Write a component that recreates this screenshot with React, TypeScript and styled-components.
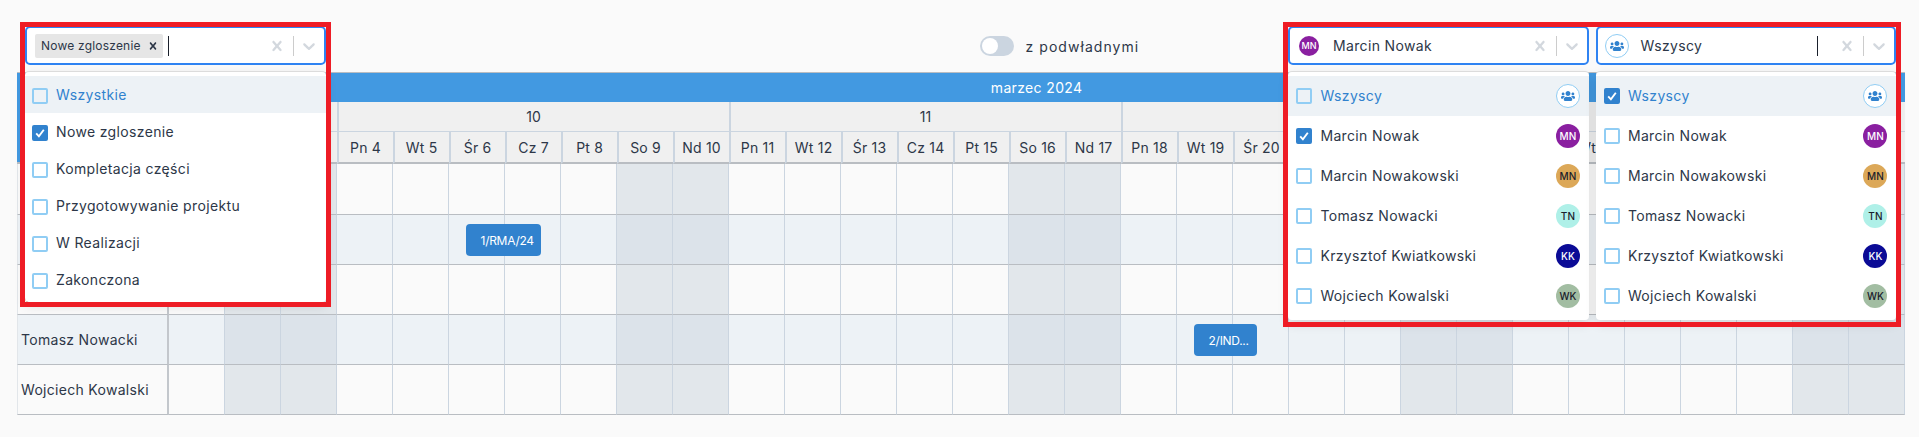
import React from "react";
import styled, { createGlobalStyle } from "styled-components";
import { FaUsers } from "react-icons/fa";

const people = [
  { name: "Marcin Nowak", initials: "MN", bg: "#8a1fa0", fg: "#ffffff" },
  { name: "Marcin Nowakowski", initials: "MN", bg: "#dca858", fg: "#1a202c" },
  { name: "Tomasz Nowacki", initials: "TN", bg: "#aff0e8", fg: "#1a202c" },
  { name: "Krzysztof Kwiatkowski", initials: "KK", bg: "#0b0b96", fg: "#ffffff" },
  { name: "Wojciech Kowalski", initials: "WK", bg: "#a2bda2", fg: "#1a202c" },
];

const statuses = [
  "Nowe zgloszenie",
  "Kompletacja części",
  "Przygotowywanie projektu",
  "W Realizacji",
  "Zakonczona",
];

const rowNames = [
  "Marcin Nowak",
  "Marcin Nowakowski",
  "Krzysztof Kwiatkowski",
  "Tomasz Nowacki",
  "Wojciech Kowalski",
];

const weeks = [
  { label: "9", days: 3 },
  { label: "10", days: 7 },
  { label: "11", days: 7 },
  { label: "12", days: 7 },
  { label: "13", days: 7 },
];

const dayNames = ["Pt", "So", "Nd", "Pn", "Wt", "Śr", "Cz"];
const days = Array.from({ length: 31 }, (_, i) => ({
  num: i + 1,
  name: dayNames[i % 7],
  weekend: i % 7 === 1 || i % 7 === 2,
}));

const events = [
  { row: 1, day: 6, label: "1/RMA/24", width: 75 },
  { row: 3, day: 19, label: "2/IND...", width: 63 },
];

const ClearIcon = ({ size = 20 }: { size?: number }) => (
  <svg width={size} height={size} viewBox="0 0 20 20" fill="currentColor">
    <path d="M14.348 14.849c-0.469 0.469-1.229 0.469-1.697 0l-2.651-3.030-2.651 3.029c-0.469 0.469-1.229 0.469-1.697 0-0.469-0.469-0.469-1.229 0-1.697l2.758-3.15-2.759-3.152c-0.469-0.469-0.469-1.228 0-1.697s1.228-0.469 1.697 0l2.652 3.031 2.651-3.031c0.469-0.469 1.228-0.469 1.697 0s0.469 1.229 0 1.697l-2.758 3.152 2.758 3.15c0.469 0.469 0.469 1.229 0 1.698z" />
  </svg>
);

const ChevronIcon = () => (
  <svg width="20" height="20" viewBox="0 0 20 20" fill="currentColor">
    <path d="M4.516 7.548c0.436-0.446 1.043-0.481 1.576 0l3.908 3.747 3.908-3.747c0.533-0.481 1.141-0.446 1.574 0 0.436 0.445 0.408 1.197 0 1.615-0.406 0.418-4.695 4.502-4.695 4.502-0.217 0.223-0.502 0.335-0.787 0.335s-0.57-0.112-0.789-0.335c0 0-4.287-4.084-4.695-4.502s-0.436-1.17 0-1.615z" />
  </svg>
);

const CheckMark = () => (
  <svg width="12" height="12" viewBox="0 0 12 12" fill="none">
    <path d="M2.2 6.4 4.9 9.3 9.8 2.8" stroke="#fff" strokeWidth="1.9" />
  </svg>
);

const Indicators = () => (
  <>
    <ClearBox>
      <ClearIcon />
    </ClearBox>
    <Separator />
    <ChevronBox>
      <ChevronIcon />
    </ChevronBox>
  </>
);

const Option = ({ label, checked, active, tall, children }: { label: string; checked?: boolean; active?: boolean; tall?: boolean; children?: React.ReactNode }) => (
  <OptionRow $active={active} $tall={tall}>
    <Checkbox $checked={checked}>{checked && <CheckMark />}</Checkbox>
    <OptionLabel $active={active}>{label}</OptionLabel>
    {children}
  </OptionRow>
);

const GroupAvatar = () => (
  <GroupCircle>
    <FaUsers size={14} />
  </GroupCircle>
);

const PeopleMenu = ({ selected }: { selected?: string }) => (
  <Menu>
    <Option label="Wszyscy" active tall checked={!selected}>
      <GroupAvatar />
    </Option>
    {people.map((p) => (
      <Option key={p.name} label={p.name} tall checked={selected === p.name}>
        <Avatar $size={24} $bg={p.bg} $fg={p.fg}>
          {p.initials}
        </Avatar>
      </Option>
    ))}
  </Menu>
);

function App() {
  return (
    <>
      <GlobalStyle />
      <Toolbar>
        <SelectGroup>
          <Control>
            <ChipArea>
              <Chip>
                Nowe zgloszenie
                <ChipRemove>
                  <ClearIcon size={14} />
                </ChipRemove>
              </Chip>
              <Caret />
            </ChipArea>
            <Indicators />
          </Control>
          <Menu>
            <Option label="Wszystkie" active />
            {statuses.map((s, i) => (
              <Option key={s} label={s} checked={i === 0} />
            ))}
          </Menu>
          <RedFrame $height={285} />
        </SelectGroup>

        <SwitchRow>
          <SwitchTrack>
            <SwitchKnob />
          </SwitchTrack>
          z podwładnymi
        </SwitchRow>

        <RightSelects>
          <SelectGroup>
            <Control>
              <ValueArea>
                <AvatarSlot>
                  <Avatar $size={20} $bg="#8a1fa0" $fg="#fff">
                    MN
                  </Avatar>
                </AvatarSlot>
                <ValueText>Marcin Nowak</ValueText>
              </ValueArea>
              <Indicators />
            </Control>
            <PeopleMenu selected="Marcin Nowak" />
          </SelectGroup>
          <SelectGroup>
            <Control>
              <ValueArea>
                <AvatarSlot>
                  <GroupAvatar />
                </AvatarSlot>
                <ValueText>Wszyscy</ValueText>
                <TrailingCaret />
              </ValueArea>
              <Indicators />
            </Control>
            <PeopleMenu />
          </SelectGroup>
          <RedFrame $height={305} />
        </RightSelects>
      </Toolbar>

      <Calendar>
        <Corner />
        <MonthCell>marzec 2024</MonthCell>
        {weeks.map((w) => (
          <WeekCell key={w.label} $span={w.days}>
            {w.label}
          </WeekCell>
        ))}
        {days.map((d) => (
          <DayCell key={d.num}>
            {d.name} {d.num}
          </DayCell>
        ))}
        {rowNames.map((name, r) => (
          <React.Fragment key={name}>
            <NameCell $even={r % 2 === 1}>{name}</NameCell>
            {days.map((d) => {
              const ev = events.find((e) => e.row === r && e.day === d.num);
              return (
                <BodyCell key={d.num} $even={r % 2 === 1} $weekend={d.weekend}>
                  {ev && <EventBar style={{ width: ev.width }}>{ev.label}</EventBar>}
                </BodyCell>
              );
            })}
          </React.Fragment>
        ))}
      </Calendar>
    </>
  );
}

export default App;

const GlobalStyle = createGlobalStyle`
  * {
    box-sizing: border-box;
  }
  html, body {
    margin: 0;
    height: 100%;
    overflow: hidden;
    background: #fafafa;
    color: #2d3748;
    font-family: Inter, "Liberation Sans", sans-serif;
    font-size: 14px;
  }
`;

const Toolbar = styled.div`
  display: flex;
  align-items: flex-start;
  height: 72px;
  padding: 26px 23px 0 25px;
`;

const SelectGroup = styled.div`
  position: relative;
  width: 300.5px;
`;

const RightSelects = styled.div`
  position: relative;
  display: flex;
  gap: 7px;
  margin-left: auto;
`;

const RedFrame = styled.div<{ $height: number }>`
  position: absolute;
  top: -4px;
  left: -5px;
  right: -5px;
  height: ${(p) => p.$height}px;
  border: 5px solid #ee1c25;
  pointer-events: none;
  z-index: 5;
`;

const Control = styled.div`
  display: flex;
  align-items: center;
  height: 39px;
  background: #fff;
  border: 2px solid #2f83f2;
  border-radius: 5px;
`;

const ChipArea = styled.div`
  flex: 1;
  display: flex;
  align-items: center;
  gap: 5px;
  padding-left: 8px;
`;

const Chip = styled.div`
  display: flex;
  align-items: center;
  justify-content: space-between;
  width: 128px;
  height: 24px;
  padding: 0 3px 0 6px;
  background: #e6e6e6;
  border-radius: 2px;
  font-size: 12px;
  letter-spacing: 0.2px;
`;

const ChipRemove = styled.span`
  display: flex;
  color: #2d3748;
`;

const Caret = styled.span`
  width: 1px;
  height: 20px;
  background: #1a202c;
`;

const TrailingCaret = styled(Caret)`
  margin-left: auto;
  margin-right: 13px;
`;

const ValueArea = styled.div`
  flex: 1;
  display: flex;
  align-items: center;
  gap: 12px;
  padding-left: 7px;
`;

const AvatarSlot = styled.div`
  display: flex;
  justify-content: center;
  width: 24px;
`;

const ValueText = styled.span`
  letter-spacing: 0.35px;
`;

const ClearBox = styled.div`
  display: flex;
  justify-content: center;
  width: 32px;
  color: #d3d8de;
`;

const Separator = styled.span`
  width: 1px;
  height: 20px;
  background: #cccccc;
`;

const ChevronBox = styled.div`
  display: flex;
  justify-content: center;
  width: 30px;
  color: #d3d8de;
`;

const Menu = styled.div`
  position: absolute;
  top: 45px;
  left: 0;
  right: 0;
  padding: 4px 0;
  background: #fff;
  border-top: 1px solid #dcdcdc;
  border-radius: 4px;
  box-shadow: 0 4px 11px rgba(0, 0, 0, 0.12);
  z-index: 4;
`;

const OptionRow = styled.div<{ $active?: boolean; $tall?: boolean }>`
  display: flex;
  align-items: center;
  height: ${(p) => (p.$tall ? 40 : 37)}px;
  padding: ${(p) => (p.$tall ? "0 8.6px 0 8.4px" : "2px 8px 0 7px")};
  background: ${(p) => (p.$active ? "#edf2f6" : "#fff")};
`;

const Checkbox = styled.span<{ $checked?: boolean }>`
  display: flex;
  align-items: center;
  justify-content: center;
  width: 16px;
  height: 16px;
  border: 2px solid ${(p) => (p.$checked ? "#3182ce" : "#90cdf4")};
  border-radius: 2px;
  background: ${(p) => (p.$checked ? "#3182ce" : "transparent")};
`;

const OptionLabel = styled.span<{ $active?: boolean }>`
  flex: 1;
  margin: 0 0 2px 8px;
  letter-spacing: 0.35px;
  color: ${(p) => (p.$active ? "#3182ce" : "#2d3748")};
`;

const Avatar = styled.span<{ $size: number; $bg: string; $fg: string }>`
  display: flex;
  align-items: center;
  justify-content: center;
  width: ${(p) => p.$size}px;
  height: ${(p) => p.$size}px;
  border-radius: 50%;
  background: ${(p) => p.$bg};
  color: ${(p) => p.$fg};
  font-size: ${(p) => (p.$size > 20 ? 10 : 9)}px;
  font-weight: 500;
`;

const GroupCircle = styled.span`
  display: flex;
  align-items: center;
  justify-content: center;
  width: 24px;
  height: 24px;
  border: 1px solid #90cdf4;
  border-radius: 50%;
  background: #fff;
  color: #3182ce;
`;

const SwitchRow = styled.div`
  display: flex;
  align-items: center;
  gap: 12px;
  height: 40px;
  margin-left: 654px;
  letter-spacing: 1.05px;
`;

const SwitchTrack = styled.span`
  display: flex;
  align-items: center;
  width: 34px;
  height: 20px;
  padding: 2px;
  border-radius: 10px;
  background: #cbd5e0;
`;

const SwitchKnob = styled.span`
  width: 16px;
  height: 16px;
  border-radius: 50%;
  background: #fff;
`;

const Calendar = styled.div`
  display: grid;
  grid-template-columns: 151.6px repeat(31, 1fr);
  grid-template-rows: 29px 30px 32px 51px repeat(4, 50px);
  width: 1887.6px;
  margin-left: 17px;
  border-top: 1px solid #b9bdc2;
`;

const Corner = styled.div`
  grid-row: span 3;
  background: #4299e1;
  border-bottom: 2px solid #b9bdc2;
`;

const MonthCell = styled.div`
  grid-column: span 31;
  display: flex;
  align-items: center;
  justify-content: center;
  background: #4299e1;
  color: #fff;
  letter-spacing: 0.35px;
`;

const HeaderCell = styled.div`
  display: flex;
  align-items: center;
  justify-content: center;
  background: #f0f0f0;
  border-left: 2px solid #cbd5e0;
  letter-spacing: 0.2px;
`;

const WeekCell = styled(HeaderCell)<{ $span: number }>`
  grid-column: span ${(p) => p.$span};
  border-bottom: 1px solid #cbd5e0;
`;

const DayCell = styled(HeaderCell)`
  border-bottom: 2px solid #b9bdc2;
`;

const NameCell = styled.div<{ $even: boolean }>`
  display: flex;
  align-items: center;
  padding-left: 3px;
  background: ${(p) => (p.$even ? "#edf2f6" : "#fafafa")};
  border-left: 1px solid #e2e6ea;
  border-right: 2px solid #c3c7cc;
  border-bottom: 1px solid #b9bdc2;
  letter-spacing: 0.3px;
`;

const weekendColor = (even: boolean) => (even ? "#dce3ea" : "#e2e7eb");
const workColor = (even: boolean) => (even ? "#edf2f6" : "#fafafa");

const BodyCell = styled.div<{ $even: boolean; $weekend: boolean }>`
  position: relative;
  background: ${(p) => (p.$weekend ? weekendColor(p.$even) : workColor(p.$even))};
  border-right: 1px solid #cbd5e0;
  border-bottom: 1px solid #b9bdc2;
`;

const EventBar = styled.div`
  position: absolute;
  top: 9px;
  left: 17px;
  display: flex;
  align-items: center;
  height: 32px;
  padding-left: 15px;
  background: #3182ce;
  border-radius: 4px;
  color: #fff;
  font-size: 12px;
  letter-spacing: -0.3px;
  white-space: nowrap;
  z-index: 1;
`;
